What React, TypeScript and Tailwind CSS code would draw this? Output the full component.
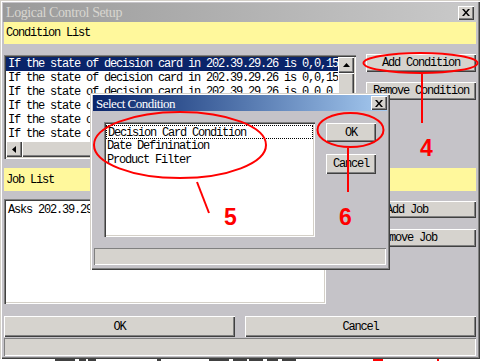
import React from "react";

const mono = "font-['Liberation_Mono',monospace] text-[12px] tracking-[-1.2px] leading-[14px] text-black";
const raised =
  "bg-[#d6d3ce] shadow-[inset_1px_1px_0_#ffffff,inset_-1px_-1px_0_#404040,inset_-2px_-2px_0_#808080]";
const sunken =
  "shadow-[inset_1px_1px_0_#808080,inset_2px_2px_0_#404040,inset_-1px_-1px_0_#ffffff,inset_-2px_-2px_0_#d4d0c8]";
const winBorder =
  "shadow-[inset_1px_1px_0_#d4d0c8,inset_2px_2px_0_#ffffff,inset_-1px_-1px_0_#404040,inset_-2px_-2px_0_#808080]";

function Btn({ label, className }: { label: string; className: string }) {
  return (
    <div className={`${raised} ${mono} flex items-center justify-center whitespace-nowrap ${className}`}>
      {label}
    </div>
  );
}

function CloseBtn() {
  return (
    <div className={`${raised} w-[16px] h-[14px] flex items-center justify-center`}>
      <svg width="8" height="7" viewBox="0 0 8 7">
        <path d="M0 0h2l2 2.5L6 0h2L5 3.5 8 7H6L4 4.5 2 7H0l3-3.5z" fill="#000" />
      </svg>
    </div>
  );
}

const rows = [
  "If the state of decision card in 202.39.29.26 is 0,0,15",
  "If the state of decision card in 202.39.29.26 is 0,0,15",
  "If the state of decision card in 202.39.29.26 is 0,0,0",
  "If the state of decision card in 202.39.29.26 is 0,1,15",
  "If the state of decision card in 202.39.29.26 is 1,0,15",
  "If the state of decision card in 202.39.29.26 is 1,1,15",
];

export default function App() {
  return (
    <div className="relative w-[480px] h-[361px] bg-white overflow-hidden">
      {/* Main window */}
      <div className={`w-[480px] h-[359px] bg-[#c5c3c8] ${winBorder} flex flex-col pt-[3px] px-[4px]`}>
        {/* title */}
        <div className="-mx-[1px] h-[19px] bg-gradient-to-r from-[#9a9a9a] to-[#cacaca] flex items-center pl-[3px] pr-[3px]">
          <span className="font-['Liberation_Serif',serif] text-[14px] text-[#d8d6d0] tracking-[-0.4px]">
            Logical Control Setup
          </span>
          <div className="ml-auto">
            <CloseBtn />
          </div>
        </div>
        {/* Condition List */}
        <div className={`h-[22px] bg-[#fff89c] flex items-center pl-[2px] ${mono}`}>Condition List</div>
        <div className="mt-[11px] flex items-start">
          <div className={`w-[352px] h-[104px] bg-white ${sunken} p-[2px] flex flex-col`}>
            <div className="flex h-[84px]">
              <div className="w-[332px] flex flex-col overflow-hidden">
                {rows.map((r, i) => (
                  <div
                    key={i}
                    className={`h-[14px] pl-[2px] whitespace-nowrap ${mono} ${
                      i === 0 ? "bg-[#0a246a] text-white" : ""
                    }`}
                  >
                    {r}
                  </div>
                ))}
              </div>
              <div className="w-[16px] flex flex-col bg-[#e4e2e6]">
                <div className={`${raised} h-[16px] flex items-center justify-center`}>
                  <svg width="7" height="4" viewBox="0 0 7 4">
                    <path d="M3.5 0L7 4H0z" fill="#000" />
                  </svg>
                </div>
                <div className={`${raised} h-[40px]`} />
              </div>
            </div>
            <div className="flex h-[16px]">
              <div className={`${raised} w-[16px] h-[16px] flex items-center justify-center`}>
                <svg width="4" height="7" viewBox="0 0 4 7">
                  <path d="M0 3.5L4 0v7z" fill="#000" />
                </svg>
              </div>
              <div className="flex-1 bg-[#e4e2e6] flex">
                <div className={`${raised} w-[180px] h-[16px]`} />
              </div>
              <div className="w-[16px] h-[16px] bg-[#d6d3ce]" />
            </div>
          </div>
          <div className="ml-auto w-[110px] -mt-[1px] flex flex-col gap-[10px]">
            <Btn label="Add Condition" className="h-[18px]" />
            <Btn label="Remove Condition" className="h-[18px]" />
          </div>
        </div>
        {/* Job List */}
        <div className={`mt-[9px] h-[23px] bg-[#fff89c] flex items-center pl-[2px] ${mono}`}>Job List</div>
        <div className="mt-[8px] flex items-start">
          <div className={`w-[322px] h-[105px] bg-white ${sunken} pt-[4px] pl-[4px]`}>
            <div className={`${mono} whitespace-nowrap`}>Asks 202.39.29.26 for the state of decision card</div>
          </div>
          <div className="ml-[12px] w-[138px] pt-[2px] flex flex-col gap-[11px]">
            <Btn label="Add Job" className="h-[17px]" />
            <Btn label="Remove Job" className="h-[18px]" />
          </div>
        </div>
        {/* OK / Cancel */}
        <div className="mt-[12px] flex">
          <Btn label="OK" className="w-[231px] h-[21px]" />
          <Btn label="Cancel" className="ml-[10px] w-[231px] h-[21px]" />
        </div>
        <div className="mt-[1px] h-[18px] bg-[#d6d3ce] shadow-[inset_1px_1px_0_#808080,inset_-1px_-1px_0_#ffffff]" />
      </div>
      {/* bits of background under the window */}
      <div className="flex h-[2px]">
        <div className="ml-[55px] w-[20px] bg-[#404040]" />
        <div className="ml-[4px] w-[7px] bg-[#404040]" />
        <div className="ml-[2px] w-[8px] bg-[#404040]" />
        <div className="ml-[61px] w-[4px] bg-[#404040]" />
        <div className="ml-[48px] w-[20px] bg-[#404040]" />
        <div className="ml-[4px] w-[14px] bg-[#404040]" />
        <div className="ml-[2px] w-[14px] bg-[#404040]" />
        <div className="ml-[4px] w-[11px] bg-[#404040]" />
        <div className="ml-[4px] w-[14px] bg-[#404040]" />
        <div className="ml-[77px] w-[10px] bg-[#ff0000]" />
        <div className="ml-[54px] w-[2px] bg-[#ff0000]" />
      </div>

      {/* Select Condition dialog */}
      <div className={`absolute left-[90px] top-[93px] w-[300px] h-[177px] bg-[#c5c3c8] ${winBorder} pt-[2px] px-[3px] flex flex-col`}>
        <div className="h-[16px] bg-gradient-to-r from-[#0a246a] to-[#a6caf0] flex items-center pl-[3px]">
          <span className="font-['Liberation_Serif',serif] text-[13px] text-white tracking-[-0.5px] leading-none">
            Select Condition
          </span>
          <div className="ml-auto">
            <CloseBtn />
          </div>
        </div>
        <div className="mt-[11px] pl-[11px] flex items-start">
          <div className={`w-[211px] h-[115px] bg-white ${sunken} p-[2px] pt-[3px]`}>
            <div className={`h-[14px] pl-[1px] border border-dotted border-black ${mono} leading-[12px]`}>
              Decision Card Condition
            </div>
            <div className={`h-[14px] pl-[1px] ${mono}`}>Date Definination</div>
            <div className={`h-[14px] pl-[1px] ${mono}`}>Product Filter</div>
          </div>
          <div className="ml-[11px] pt-[1px] flex flex-col gap-[12px]">
            <Btn label="OK" className="w-[50px] h-[19px]" />
            <Btn label="Cancel" className="w-[50px] h-[20px]" />
          </div>
        </div>
        <div className="mt-[11px] ml-[1px] w-[292px] h-[17px] bg-[#d6d3ce] shadow-[inset_1px_1px_0_#808080,inset_-1px_-1px_0_#ffffff]" />
      </div>

      {/* Red annotations */}
      <svg className="absolute left-0 top-0 pointer-events-none" width="480" height="361" viewBox="0 0 480 361">
        <g stroke="#ff0000" strokeWidth="2" fill="none">
          <ellipse cx="420.5" cy="63" rx="57" ry="10" />
          <line x1="422" y1="74" x2="422" y2="123" />
          <ellipse cx="180" cy="145" rx="86" ry="33" />
          <line x1="197" y1="182" x2="209" y2="213" />
          <ellipse cx="350.5" cy="130" rx="33" ry="17" />
          <line x1="348" y1="148" x2="348" y2="192" />
        </g>
        <g fill="#ff0000" fontFamily="'Liberation Sans', Arial, sans-serif" fontWeight="bold" fontSize="23">
          <text x="420" y="156">4</text>
          <text x="224" y="225">5</text>
          <text x="339" y="225">6</text>
        </g>
      </svg>
    </div>
  );
}
